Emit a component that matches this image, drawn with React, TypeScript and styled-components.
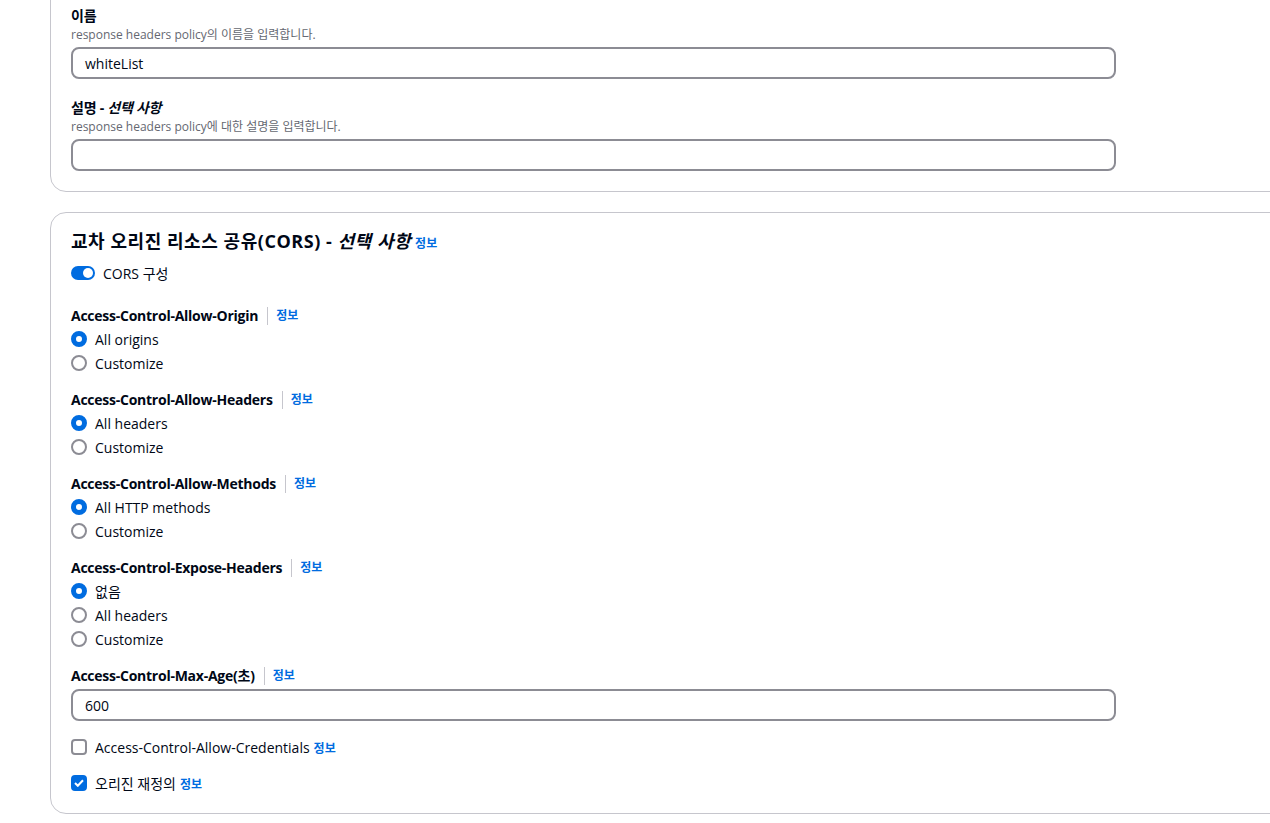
import React from 'react';
import styled, { createGlobalStyle } from 'styled-components';

const GlobalStyle = createGlobalStyle`
  body {
    margin: 0;
    background: #ffffff;
    color: #000716;
    font-family: "Open Sans", "Noto Sans CJK KR", sans-serif;
    font-size: 14px;
  }
`;

const Page = styled.div`
  padding-left: 50px;
  overflow: hidden;
  height: 823px;
`;

const Card = styled.section<{ $top?: number }>`
  margin-top: ${props => props.$top ?? 0}px;
  margin-right: -40px;
  border: 1px solid #c6c6cd;
  border-radius: 16px;
  padding: 20px 20px 20px 20px;
  display: flex;
  flex-direction: column;
`;

const Field = styled.div<{ $gap?: number }>`
  display: flex;
  flex-direction: column;
  margin-top: ${props => props.$gap ?? 0}px;
`;

const Label = styled.div`
  font-size: 14px;
  font-weight: 700;
  line-height: 22px;
  letter-spacing: -0.25px;
  display: flex;
  align-items: center;
  em {
    font-style: italic;
  }
`;

const Description = styled.div`
  font-size: 12px;
  line-height: 16px;
  color: #656871;
`;

const Input = styled.div<{ $gap?: number }>`
  margin-top: ${props => props.$gap ?? 4}px;
  box-sizing: border-box;
  width: 1045px;
  height: 32px;
  border: 2px solid #8c8c94;
  border-radius: 8px;
  padding: 0 12px;
  display: flex;
  align-items: center;
  font-size: 14px;
`;

const Title = styled.h2`
  margin: 0;
  font-size: 18px;
  font-weight: 700;
  line-height: 22px;
  letter-spacing: 0.55px;
  display: flex;
  align-items: baseline;
  em {
    font-style: italic;
    margin-left: 5px;
  }
`;

const InfoLink = styled.span<{ $gap?: number }>`
  color: #006ce0;
  font-size: 12px;
  font-weight: 700;
  letter-spacing: 0;
  margin-left: ${props => props.$gap ?? 4}px;
`;

const Divider = styled.span`
  display: inline-block;
  width: 1px;
  height: 18px;
  background: #c6c6cd;
  margin: 0 8px 0 9px;
`;

const ToggleRow = styled.div`
  margin-top: 7px;
  display: flex;
  align-items: center;
  height: 22px;
  gap: 8px;
`;

const Track = styled.span`
  position: relative;
  width: 24px;
  height: 14px;
  border-radius: 7px;
  background: #006ce0;
`;

const Knob = styled.span`
  position: absolute;
  right: 2px;
  top: 2px;
  width: 10px;
  height: 10px;
  border-radius: 50%;
  background: #ffffff;
`;

const Group = styled.div<{ $gap: number }>`
  margin-top: ${props => props.$gap}px;
  display: flex;
  flex-direction: column;
`;

const Options = styled.div`
  display: flex;
  flex-direction: column;
`;

const OptionRow = styled.label<{ $gap?: number }>`
  display: flex;
  align-items: center;
  gap: 8px;
  height: 24px;
  margin-top: ${props => props.$gap ?? 0}px;
  font-size: 14px;
`;

const RadioCircle = styled.span<{ $checked?: boolean }>`
  box-sizing: border-box;
  width: 16px;
  height: 16px;
  border-radius: 50%;
  border: ${props => (props.$checked ? '5px solid #006ce0' : '2px solid #8c8c94')};
  background: #ffffff;
`;

const CheckBox = styled.span<{ $checked?: boolean }>`
  box-sizing: border-box;
  width: 16px;
  height: 16px;
  border-radius: 4px;
  border: 2px solid ${props => (props.$checked ? '#006ce0' : '#8c8c94')};
  background: ${props => (props.$checked ? '#006ce0' : '#ffffff')};
  display: flex;
  align-items: center;
  justify-content: center;
`;

interface RadioGroupProps {
  label: string;
  options: string[];
  gap: number;
}

function RadioGroup({ label, options, gap }: RadioGroupProps) {
  return (
    <Group $gap={gap}>
      <Label>
        {label}
        <Divider />
        <InfoLink $gap={0}>정보</InfoLink>
      </Label>
      <Options>
        {options.map((opt, i) => (
          <OptionRow key={opt}>
            <RadioCircle $checked={i === 0} />
            {opt}
          </OptionRow>
        ))}
      </Options>
    </Group>
  );
}

function App() {
  return (
    <>
      <GlobalStyle />
      <Page>
        <Card $top={-16}>
          <Field>
            <Label>이름</Label>
            <Description>response headers policy의 이름을 입력합니다.</Description>
            <Input>whiteList</Input>
          </Field>
          <Field $gap={18}>
            <Label>
              설명 -&nbsp;<em>선택 사항</em>
            </Label>
            <Description>response headers policy에 대한 설명을 입력합니다.</Description>
            <Input />
          </Field>
        </Card>

        <Card $top={20} style={{ paddingTop: 17, paddingBottom: 18 }}>
          <Title>
            교차 오리진 리소스 공유(CORS) -<em>선택 사항</em>
            <InfoLink>정보</InfoLink>
          </Title>
          <ToggleRow>
            <Track>
              <Knob />
            </Track>
            CORS 구성
          </ToggleRow>
          <RadioGroup gap={21} label="Access-Control-Allow-Origin" options={['All origins', 'Customize']} />
          <RadioGroup gap={14} label="Access-Control-Allow-Headers" options={['All headers', 'Customize']} />
          <RadioGroup gap={14} label="Access-Control-Allow-Methods" options={['All HTTP methods', 'Customize']} />
          <RadioGroup
            gap={14}
            label="Access-Control-Expose-Headers"
            options={['없음', 'All headers', 'Customize']}
          />
          <Group $gap={14}>
            <Label>
              Access-Control-Max-Age(초)
              <Divider />
              <InfoLink $gap={0}>정보</InfoLink>
            </Label>
            <Input $gap={2}>600</Input>
          </Group>
          <OptionRow $gap={14}>
            <CheckBox />
            <span>
              Access-Control-Allow-Credentials
              <InfoLink>정보</InfoLink>
            </span>
          </OptionRow>
          <OptionRow $gap={12}>
            <CheckBox $checked>
              <svg width="10" height="8" viewBox="0 0 10 8">
                <path d="M1 4l2.8 2.8L9 1.2" fill="none" stroke="#ffffff" strokeWidth="2" />
              </svg>
            </CheckBox>
            <span>
              오리진 재정의
              <InfoLink>정보</InfoLink>
            </span>
          </OptionRow>
        </Card>
      </Page>
    </>
  );
}

export default App;
